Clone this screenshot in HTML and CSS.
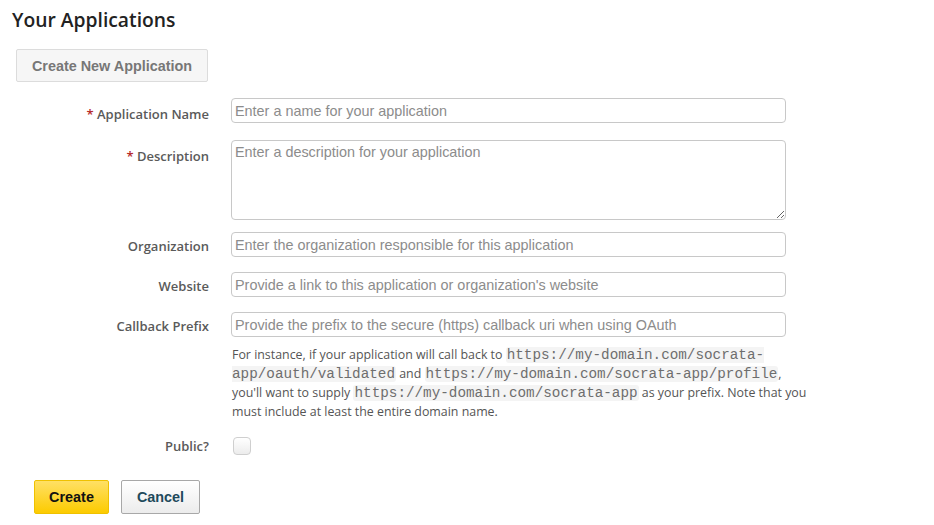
FILE: index.html
```html
<!DOCTYPE html>
<html lang="en">
<head>
<meta charset="utf-8">
<title>Your Applications</title>
<link rel="stylesheet" href="styles.css">
</head>
<body>
<div class="page">
  <h1 class="title">Your Applications</h1>
  <button type="button" class="btn-new">Create New Application</button>
  <form class="form">
    <div class="row row-name">
      <label class="label label-req" for="app-name"><span class="req">*</span> Application Name</label>
      <div class="field"><input id="app-name" class="input" type="text" placeholder="Enter a name for your application"></div>
    </div>
    <div class="row row-desc">
      <label class="label label-req" for="app-desc"><span class="req">*</span> Description</label>
      <div class="field"><textarea id="app-desc" class="textarea" placeholder="Enter a description for your application"></textarea></div>
    </div>
    <div class="row row-org">
      <label class="label" for="app-org">Organization</label>
      <div class="field"><input id="app-org" class="input" type="text" placeholder="Enter the organization responsible for this application"></div>
    </div>
    <div class="row">
      <label class="label" for="app-web">Website</label>
      <div class="field"><input id="app-web" class="input" type="text" placeholder="Provide a link to this application or organization's website"></div>
    </div>
    <div class="row">
      <label class="label" for="app-cb">Callback Prefix</label>
      <div class="field">
        <input id="app-cb" class="input" type="text" placeholder="Provide the prefix to the secure (https) callback uri when using OAuth">
        <p class="help">For instance, if your application will call back to <code>https://my-domain.com/socrata-app/oauth/validated</code> and <code>https://my-domain.com/socrata-app/profile</code>, you'll want to supply <code>https://my-domain.com/socrata-app</code> as your prefix. Note that you must include at least the entire domain name.</p>
      </div>
    </div>
    <div class="row row-public">
      <label class="label label-public" for="app-public">Public?</label>
      <div class="field"><input id="app-public" class="check" type="checkbox"></div>
    </div>
    <div class="actions">
      <button type="button" class="btn btn-create">Create</button>
      <button type="button" class="btn btn-cancel">Cancel</button>
    </div>
  </form>
</div>
</body>
</html>
```

FILE: styles.css
```css
html, body {
  margin: 0;
  padding: 0;
  background: #fff;
}

.page {
  padding: 6px 12px 0 12px;
  font-family: "Open Sans", "Liberation Sans", sans-serif;
}

.title {
  margin: 0;
  font-size: 19.3px;
  line-height: 27px;
  font-weight: 600;
  color: #222;
}

.btn-new {
  display: block;
  margin: 16px 0 0 4px;
  width: 192px;
  height: 33px;
  padding: 0;
  background: #f6f6f6;
  border: 1px solid #dcdcdc;
  border-radius: 2px;
  font-family: "Liberation Sans", Arial, sans-serif;
  font-weight: bold;
  font-size: 14.4px;
  color: #777;
}

.form {
  margin: 0;
}

.row {
  display: flex;
  gap: 22px;
  margin-top: 15px;
}

.row-name {
  margin-top: 16px;
}

.row-desc {
  margin-top: 17px;
}

.row-org {
  margin-top: 12px;
}

.label {
  width: 197px;
  flex: none;
  text-align: right;
  padding-top: 5px;
  font-size: 13px;
  line-height: 18px;
  font-weight: 600;
  color: #5a5a5a;
}

.label-req {
  padding-top: 7px;
}

.req {
  color: #b52a2a;
}

.field {
  width: 555px;
  flex: none;
}

.input,
.textarea {
  display: block;
  box-sizing: border-box;
  width: 555px;
  margin: 0;
  border: 1px solid #c8c8c8;
  border-radius: 4px;
  font-family: "Liberation Sans", Arial, sans-serif;
  font-size: 14.4px;
  color: #333;
  background: #fff;
}

.input {
  height: 25px;
  padding: 0 3px;
}

.textarea {
  height: 80px;
  padding: 3px 3px;
  line-height: 16px;
}

.input::placeholder,
.textarea::placeholder {
  color: #8c8c8c;
}

.help {
  width: 578px;
  margin: 8px 0 0 1px;
  font-size: 12.4px;
  line-height: 19px;
  color: #555;
}

.help code {
  font-family: "Liberation Mono", "Courier New", monospace;
  font-size: 14.3px;
  line-height: 1;
  color: #6e6e6e;
  background: #f4f4f4;
  border-radius: 3px;
  padding: 0 1px;
}

.row-public {
  margin-top: 16px;
}

.label-public {
  padding-top: 0;
}

.check {
  appearance: none;
  -webkit-appearance: none;
  display: block;
  width: 18px;
  height: 18px;
  margin: 0 0 0 2px;
  border: 1px solid #cfcfcf;
  border-radius: 4px;
  background: linear-gradient(#ffffff, #ececec);
  box-sizing: border-box;
}

.actions {
  display: flex;
  gap: 12px;
  margin: 25px 0 0 22px;
}

.btn {
  height: 34px;
  padding: 0;
  border-radius: 2px;
  font-family: "Liberation Sans", Arial, sans-serif;
  font-weight: bold;
  font-size: 14.4px;
}

.btn-create {
  width: 75px;
  background: linear-gradient(#ffe065, #fccb00);
  border: 1px solid #efc100;
  color: #111;
}

.btn-cancel {
  width: 79px;
  background: linear-gradient(#ffffff, #ececec);
  border: 1px solid #a8a8a8;
  color: #1e4a5c;
}
```
